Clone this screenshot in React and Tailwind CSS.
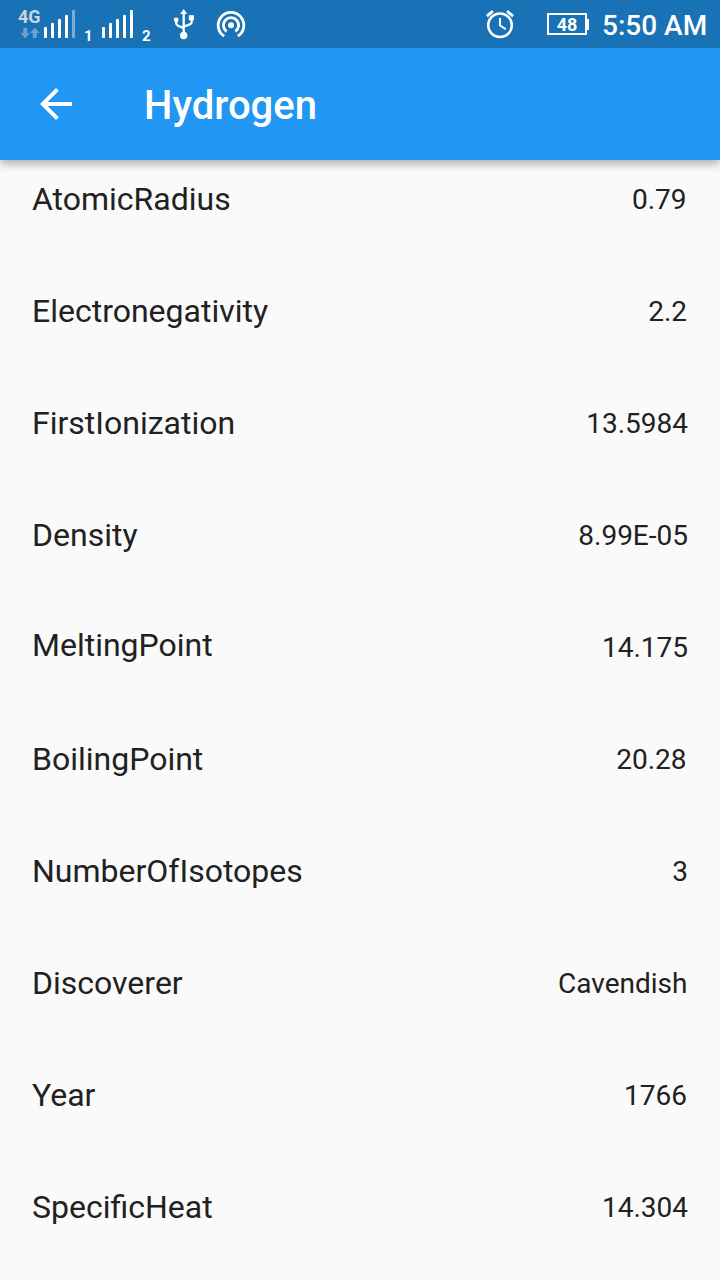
const properties = [
  { name: 'AtomicRadius', value: '0.79', inset: 'pr-[1.5px]' },
  { name: 'Electronegativity', value: '2.2', inset: 'pr-px' },
  { name: 'FirstIonization', value: '13.5984' },
  { name: 'Density', value: '8.99E-05' },
  { name: 'MeltingPoint', value: '14.175', raised: true },
  { name: 'BoilingPoint', value: '20.28', inset: 'pr-[1.5px]' },
  { name: 'NumberOfIsotopes', value: '3' },
  { name: 'Discoverer', value: 'Cavendish', inset: 'pr-[0.5px]' },
  { name: 'Year', value: '1766', inset: 'pr-px' },
  { name: 'SpecificHeat', value: '14.304' },
];

function SignalBars({ weak }) {
  return (
    <svg className="mt-[10px] h-7 w-8 shrink-0" viewBox="0 0 32 28" fill="white">
      <rect x="0" y="17" width="3" height="11" rx="0.7" />
      <rect x="7" y="13" width="3" height="15" rx="0.7" />
      <rect x="14" y="9" width="3" height="19" rx="0.7" />
      <rect x="21" y="5" width="3" height="23" rx="0.7" />
      <rect x="28" y="0" width="3" height="28" rx="0.7" opacity={weak ? 0.42 : 1} />
    </svg>
  );
}

function StatusBar() {
  return (
    <div className="flex h-12 shrink-0 items-start bg-[#1971b6] pl-[18px] text-white">
      <div className="flex w-[26px] shrink-0 flex-col">
        <span className="mt-[7px] h-[18px] text-[18px] leading-[19px] font-bold text-[#c9d5df]">4G</span>
        <svg className="ml-[2px] mt-[2px] h-3 w-5" viewBox="0 0 20 12" fill="#6c9fca">
          <path d="M3.2 1h4v5H10l-4.8 5.5L.4 6h2.8zM12.8 11h4V6h2.8L14.8.5 10 6h2.8z" />
        </svg>
      </div>
      <SignalBars weak />
      <span className="mt-[27px] ml-2 w-[18px] text-[15px] leading-[18px] font-bold">1</span>
      <SignalBars />
      <span className="mt-[27px] ml-2 w-[10px] text-[15px] leading-[18px] font-bold">2</span>
      <svg className="mt-[9px] ml-[21px] h-[31px] w-[22px] shrink-0" viewBox="0 0 22 31" fill="none" stroke="white" strokeWidth="2.3">
        <path d="M10.7 4v21M3.2 11v3.2q0 1.8 1.8 2.5l5.7 2.4M18.7 9v3.8q0 2-1.8 2.6l-6.2 2.2" />
        <path d="M10.7 0l3.5 5h-7z" fill="white" stroke="none" />
        <circle cx="3.2" cy="10.8" r="2.4" fill="white" stroke="none" />
        <rect x="15.8" y="6.2" width="5.2" height="5" fill="white" stroke="none" />
        <circle cx="10.7" cy="26.5" r="3.7" fill="white" stroke="none" />
      </svg>
      <svg className="mt-[10px] ml-[21px] h-[29px] w-[30px] shrink-0" viewBox="0 0 30 29" fill="none" stroke="white" strokeWidth="2.8">
        <path d="M8.2 26.1A12.8 12.8 0 1 1 21.8 26.1M10.6 21.5A7.6 7.6 0 1 1 19.4 21.5" />
        <circle cx="15" cy="15.3" r="3" fill="white" stroke="none" />
      </svg>
      <div className="grow" />
      <svg className="mt-[9px] h-[30px] w-[30px] shrink-0" viewBox="0 0 30 30" fill="none" stroke="white" strokeWidth="2.5">
        <circle cx="15" cy="16.2" r="11.8" />
        <path d="M15 9v7.5l5.8 3.7" strokeWidth="2" />
        <path d="M1.9 7.2l6-5M22.1 2.2l6 5" strokeWidth="2.8" />
      </svg>
      <div className="mt-[13px] ml-8 flex shrink-0 items-center">
        <div className="flex h-[22px] w-10 items-center justify-center border-2 border-white pt-[2px] text-[18px] leading-[18px] font-bold">
          48
        </div>
        <div className="h-[11px] w-[2px] bg-white" />
      </div>
      <span className="mt-[10px] mr-[13px] ml-[13px] w-[105px] shrink-0 text-[28px] leading-8 font-medium whitespace-nowrap">
        5:50 AM
      </span>
    </div>
  );
}

export default function App() {
  return (
    <div className="flex h-[1280px] w-[720px] flex-col overflow-hidden bg-[#fafafa] font-['Roboto','Liberation_Sans',sans-serif]">
      <header className="z-10 flex shrink-0 flex-col shadow-[0_4px_10px_rgba(0,0,0,0.2),0_3px_8px_rgba(0,0,0,0.14)]">
        <StatusBar />
        <div className="flex h-28 items-center bg-[#2196f3] pl-8 text-white">
          <svg className="h-12 w-12 shrink-0" viewBox="0 0 24 24" fill="currentColor">
            <path d="M20 11H7.83l5.59-5.59L12 4l-8 8 8 8 1.41-1.41L7.83 13H20v-2z" />
          </svg>
          <h1 className="mt-1 ml-16 text-[40px] leading-[48px] font-medium">Hydrogen</h1>
        </div>
      </header>
      <main className="-mt-4 flex flex-col">
        {properties.map(({ name, value, raised, inset }) => (
          <div key={name} className="flex h-28 shrink-0 items-center justify-between px-8 text-[#212121]">
            <span className={raised ? 'pb-[6px] text-[32px] leading-10' : 'pb-[2px] text-[32px] leading-10'}>{name}</span>
            <span className={`text-[28px] leading-9 ${inset ?? ''}`}>{value}</span>
          </div>
        ))}
      </main>
    </div>
  );
}
